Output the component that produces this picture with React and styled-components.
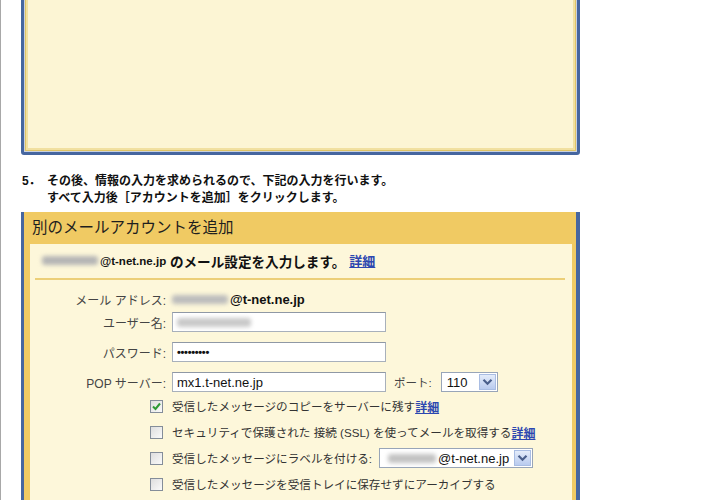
import React from "react";
import styled, { createGlobalStyle } from "styled-components";

const GlobalStyle = createGlobalStyle`
  html, body { margin: 0; padding: 0; background: #fff; }
  body { font-family: "Liberation Sans", "Noto Sans CJK JP", sans-serif; }
`;

const Page = styled.div`
  display: flex;
  flex-direction: column;
  width: 720px;
  height: 500px;
  overflow: hidden;
  box-sizing: border-box;
  border-left: 1px solid #a8a8a8;
  padding-left: 20px;
`;

const TopPanel = styled.div`
  flex: none;
  margin-top: -20px;
  height: 175px;
  width: 559px;
  box-sizing: border-box;
  border: 3px solid #46669f;
  border-radius: 0 0 3px 3px;
  background: #fcf5d4;
  box-shadow: inset 0 0 0 1px #c9d1e0, inset 0 0 0 2px #e0c466,
    inset 0 0 0 4px #f1e0a0;
`;

const Instruction = styled.div`
  flex: none;
  display: flex;
  margin-top: 18px;
  padding-left: 1px;
  font-size: 12px;
  font-weight: bold;
  line-height: 17px;
  color: #111;
`;

const Num = styled.span`
  flex: none;
  width: 25px;
`;

const BottomPanel = styled.div`
  flex: 1;
  display: flex;
  flex-direction: column;
  margin-top: 5px;
  width: 559px;
  box-sizing: border-box;
  border-left: 3px solid #46669f;
  border-right: 4px solid #46669f;
  background: #f0ca63;
`;

const Header = styled.div`
  flex: none;
  height: 32px;
  line-height: 32px;
  padding-left: 8px;
  font-size: 15.5px;
  color: #1e1e1e;
`;

const Content = styled.div`
  flex: 1;
  margin: 0 4px 0 6px;
  background: #fdf7da;
  padding-top: 8px;
`;

const IntroLine = styled.div`
  display: flex;
  align-items: center;
  height: 17px;
  padding-left: 12px;
  font-size: 13.6px;
  font-weight: bold;
  color: #111;
  white-space: nowrap;
`;

const Domain = styled.span`
  font-size: ${(p) => p.$size || 13}px;
  font-weight: ${(p) => (p.$bold ? "bold" : "normal")};
  color: #111;
`;

const Link = styled.a`
  color: #2c47b0;
  text-decoration: underline;
  font-weight: bold;
  font-size: ${(p) => p.$size || 12}px;
  margin-left: ${(p) => p.$ml || 0}px;
  cursor: pointer;
`;

const Blur = styled.span`
  display: inline-block;
  flex: none;
  width: ${(p) => p.$w}px;
  height: 9px;
  background: ${(p) => p.$c || "#b5b5b5"};
  filter: blur(2px);
  border-radius: 3px;
  margin-right: 2px;
`;

const Separator = styled.div`
  height: 2px;
  background: #eccf78;
  margin: 9px 7px 0 5px;
`;

const Form = styled.div`
  padding-left: 5px;
  margin-top: 10px;
`;

const FieldRow = styled.div`
  display: grid;
  grid-template-columns: 131px auto;
  column-gap: 6px;
  align-items: center;
  height: ${(p) => p.$h || 20}px;
  margin-top: ${(p) => p.$mt || 0}px;
`;

const Label = styled.span`
  text-align: right;
  font-size: 12px;
  color: #444;
  white-space: nowrap;
`;

const Value = styled.div`
  display: flex;
  align-items: center;
`;

const InputBox = styled.div`
  display: flex;
  align-items: center;
  width: 214px;
  height: 20px;
  box-sizing: border-box;
  border: 1px solid #a8b0bb;
  border-top-color: #8f98a5;
  background: #fff;
  padding-left: 4px;
  font-size: 13px;
  color: #111;
  white-space: nowrap;
`;

const Dots = styled.span`
  font-size: 11px;
  font-weight: bold;
  letter-spacing: -0.3px;
`;

const PortLabel = styled.span`
  margin: 0 9px 0 8px;
  font-size: 11.5px;
  color: #444;
`;

const SelectBox = styled.div`
  display: inline-flex;
  align-items: center;
  justify-content: space-between;
  flex: none;
  width: ${(p) => p.$w}px;
  height: 20px;
  box-sizing: border-box;
  border: 1px solid #98a5b8;
  background: #fff;
  padding-left: ${(p) => p.$pl || 5}px;
  font-size: 13px;
  color: #111;
  margin-left: ${(p) => p.$ml || 0}px;
`;

const DropBtn = styled.span`
  display: flex;
  align-items: center;
  justify-content: center;
  width: 17px;
  height: 16px;
  margin-right: 1px;
  box-sizing: border-box;
  border: 1px solid #a9bde3;
  background: linear-gradient(#e4ecfa, #b9cbef);
`;

const CheckList = styled.div`
  display: flex;
  flex-direction: column;
  gap: 6px;
  margin: 4px 0 0 115px;
`;

const CheckRow = styled.div`
  display: flex;
  align-items: center;
  height: 20px;
  font-size: 11.6px;
  color: #333;
  white-space: nowrap;
`;

const Box = styled.span`
  display: flex;
  align-items: center;
  justify-content: center;
  flex: none;
  width: 13px;
  height: 13px;
  box-sizing: border-box;
  border: 1px solid #848d99;
  background: linear-gradient(135deg, #dedede, #fafafa);
  margin-right: 9px;
`;

const Chevron = () => (
  <svg width="11" height="8" viewBox="0 0 11 8">
    <path d="M1.5 1.8 L5.5 5.8 L9.5 1.8" fill="none" stroke="#4a5f8c" strokeWidth="2.2" />
  </svg>
);

const Check = () => (
  <svg width="11" height="11" viewBox="0 0 11 11">
    <path d="M2 5.5 L4.5 8 L9 2.5" fill="none" stroke="#2e9a34" strokeWidth="2" />
  </svg>
);

const Select = ({ w, ml, children }) => (
  <SelectBox $w={w} $ml={ml}>
    <span>{children}</span>
    <DropBtn>
      <Chevron />
    </DropBtn>
  </SelectBox>
);

const CheckItem = ({ checked, children }) => (
  <CheckRow>
    <Box>{checked && <Check />}</Box>
    {children}
  </CheckRow>
);

export default function App() {
  return (
    <>
      <GlobalStyle />
      <Page>
        <TopPanel />
        <Instruction>
          <Num>5．</Num>
          <span>
            その後、情報の入力を求められるので、下記の入力を行います。
            <br />
            すべて入力後［アカウントを追加］をクリックします。
          </span>
        </Instruction>
        <BottomPanel>
          <Header>別のメールアカウントを追加</Header>
          <Content>
            <IntroLine>
              <Blur $w={56} />
              <Domain $size={11.5} $bold>@t-net.ne.jp</Domain>
              &nbsp;のメール設定を入力します。
              <Link $size={13} $ml={4}>詳細</Link>
            </IntroLine>
            <Separator />
            <Form>
              <FieldRow $h={18}>
                <Label>メール アドレス:</Label>
                <Value>
                  <Blur $w={56} $c="#bcbcbc" />
                  <Domain $size={13} $bold>@t-net.ne.jp</Domain>
                </Value>
              </FieldRow>
              <FieldRow $mt={4}>
                <Label>ユーザー名:</Label>
                <Value>
                  <InputBox>
                    <Blur $w={74} $c="#c9c9c9" />
                  </InputBox>
                </Value>
              </FieldRow>
              <FieldRow $mt={10}>
                <Label>パスワード:</Label>
                <Value>
                  <InputBox>
                    <Dots>•••••••••</Dots>
                  </InputBox>
                </Value>
              </FieldRow>
              <FieldRow $mt={10}>
                <Label>POP サーバー:</Label>
                <Value>
                  <InputBox>mx1.t-net.ne.jp</InputBox>
                  <PortLabel>ポート:</PortLabel>
                  <Select w={57}>110</Select>
                </Value>
              </FieldRow>
              <CheckList>
                <CheckItem checked>
                  受信したメッセージのコピーをサーバーに残す
                  <Link>詳細</Link>
                </CheckItem>
                <CheckItem>
                  セキュリティで保護された 接続 (SSL) を使ってメールを取得する
                  <Link>詳細</Link>
                </CheckItem>
                <CheckItem>
                  受信したメッセージにラベルを付ける:
                  <SelectBox $w={154} $ml={7} $pl={8}>
                    <Value>
                      <Blur $w={48} $c="#c2c2c2" />
                      <span>@t-net.ne.jp</span>
                    </Value>
                    <DropBtn>
                      <Chevron />
                    </DropBtn>
                  </SelectBox>
                </CheckItem>
                <CheckItem>
                  受信したメッセージを受信トレイに保存せずにアーカイブする
                </CheckItem>
              </CheckList>
            </Form>
          </Content>
        </BottomPanel>
      </Page>
    </>
  );
}
